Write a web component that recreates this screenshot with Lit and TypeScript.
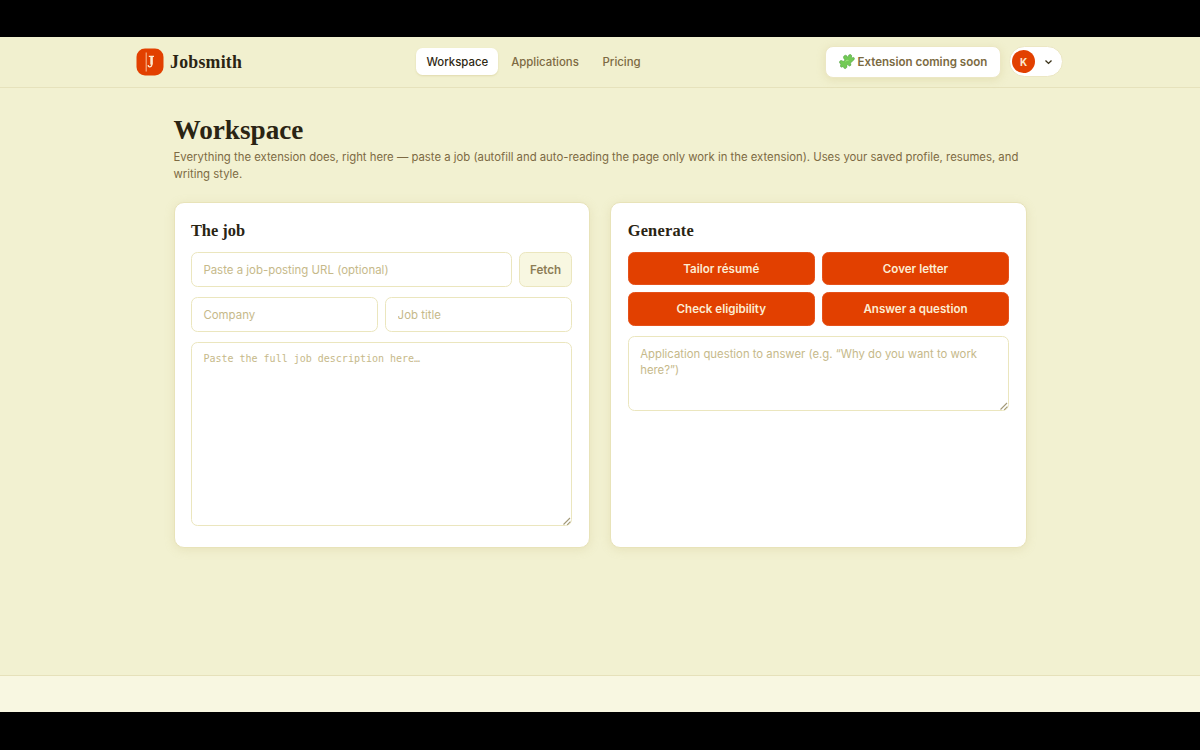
import { LitElement, html, css } from "lit";
import { customElement } from "lit/decorators.js";

const grip = html`<svg class="grip" viewBox="0 0 10 10" width="10" height="10">
  <path d="M1.5 8.5L8 2M5.2 8.8L8.4 5.6" stroke="#a39a78" stroke-width="1.1" fill="none" />
</svg>`;

@customElement("app-root")
export class AppRoot extends LitElement {
  static styles = css`
    :host { display: block; width: 1200px; height: 750px; overflow: hidden; background: #000; font-family: Inter, sans-serif; font-size: 11.4px; color: #2a2413; }
    * { box-sizing: border-box; }
    .frame { height: 750px; padding: 37px 0 38px; }
    .page { height: 675px; background: #f2f1d1; display: flex; flex-direction: column; }
    .top { height: 51px; border-bottom: 1px solid #e6e2bc; display: flex; align-items: center; justify-content: space-between; padding: 0 137px 1px 136px; background: #f1f0cf; }
    .brand { width: 280px; display: flex; align-items: center; gap: 6px; }
    .logo { display: block; }
    .name { font: 700 17.8px/20px "Liberation Serif", serif; letter-spacing: 0.25px; padding-top: 1px; }
    .nav { display: flex; flex: 1; gap: 2.7px; font-weight: 500; color: #7d6a43; }
    .tab { height: 27px; padding: 0 10.5px; display: flex; align-items: center; border-radius: 6.5px; }
    .on { padding-right: 9.8px; background: #fff; color: #2f2813; box-shadow: 0 1px 2px #c9bc7a66; }
    .right { display: flex; align-items: center; gap: 8px; }
    .ext { height: 32px; width: 176px; padding: 0 0 0 13px; display: flex; align-items: center; gap: 2.5px; background: #fff; border-radius: 8px; border: 1px solid #ece7c4; color: #7b6a42; font-weight: 600; font-size: 11.55px; box-shadow: 0 2px 8px #c9bc7a4d; white-space: nowrap; }
    .user { height: 31px; width: 54px; display: flex; align-items: center; gap: 8.5px; padding-left: 2px; background: #fff; border: 1px solid #ece7c4; border-radius: 16px; }
    .avatar { width: 23px; height: 23px; border-radius: 50%; background: #e24000; color: #fbe9cf; font-size: 10px; font-weight: 700; display: grid; place-items: center; }
    .main { flex: 1; padding: 27px 173.5px 0; }
    h1 { margin: 0; font: 700 27.2px/31px "Liberation Serif", serif; }
    .sub { margin: 3px 0 19.1px; font-size: 11.33px; line-height: 16.7px; color: #7d6a43; }
    .cols { display: grid; grid-template-columns: minmax(0, 1fr) minmax(0, 1fr); gap: 20.6px; }
    .card { height: 346px; border: 1px solid #e8e3b9; border-radius: 10px; background: #fff; padding: 17.2px 16.4px; box-shadow: 0 2px 10px #c9bc7a40; display: flex; flex-direction: column; }
    h2 { margin: 0 0 11.3px; font: 700 16.4px/21px "Liberation Serif", serif; }
    .wide { letter-spacing: 0.2px; }
    .row { display: flex; gap: 7px; margin-bottom: 10px; }
    .field { height: 35px; flex: 1; min-width: 0; border: 1px solid #ebe6be; border-radius: 6.5px; background: #fff; padding: 1.4px 11.5px 0; font: 400 11.45px Inter, sans-serif; }
    .field::placeholder, .area::placeholder { color: #c6b98a; opacity: 1; }
    .fetch { width: 53.4px; height: 35px; padding: 1.4px 0 0; border: 1px solid #ebe6be; border-radius: 6.5px; background: #f8f7e1; color: #8c7d55; font: 600 11.67px Inter, sans-serif; }
    .box { position: relative; display: flex; }
    .area { width: 100%; resize: none; border: 1px solid #ebe6be; border-radius: 6.5px; padding: 9.1px 11.5px 8px; font: 400 11.33px/16.7px Inter, sans-serif; overflow: hidden; }
    .mono { height: 184px; padding-top: 8.3px; font: 400 10px/16.7px "DejaVu Sans Mono", monospace; }
    .question { height: 75px; }
    .grip { position: absolute; right: 0; bottom: 0; }
    .actions { display: grid; grid-template-columns: 1fr 1fr; gap: 7px; margin-bottom: 10px; }
    .act { height: 33.3px; padding: 0; border: 1px solid #e5511a; border-radius: 6.5px; background: #e24000; color: #fcecd2; font: 600 11.6px Inter, sans-serif; }
    .foot { height: 37px; border-top: 1px solid #e6e1ba; background: #f8f7e1; }
  `;

  render() {
    return html`<div class="frame"><div class="page">
      <header class="top">
        <div class="brand">
          <svg class="logo" width="28" height="28" viewBox="0 0 28 28">
            <rect x=".5" y=".5" width="27" height="27" rx="8.5" fill="#e24000" />
            <path d="M10.2 4.5V23.5" stroke="#f6b58c" stroke-width="1.1" />
            <path d="M12.8 8.4H18M15.8 8.4V16.2Q15.8 19 13.4 18.8Q12 18.6 12.2 17" stroke="#fdebd0" stroke-width="1.3" fill="none" />
            <path d="M15.5 8.4V16.6" stroke="#fdebd0" stroke-width="2.4" />
          </svg>
          <span class="name">Jobsmith</span>
        </div>
        <nav class="nav"><span class="tab on">Workspace</span><span class="tab">Applications</span><span class="tab">Pricing</span></nav>
        <div class="right">
          <div class="ext">
            <svg width="16" height="16" viewBox="0 0 16 16"><g transform="translate(0 -.4)">
              <path d="M5.2 2.2Q7 .8 8 2.6Q8.3 3.8 9.2 3.2Q9.4 .6 11.6 1Q13.3 1.6 12.4 3.6Q13.2 4.4 14.8 3.8Q16 4.8 14.8 6.4Q13.2 8 12.3 8.6Q11.4 8.6 11.6 9.8Q12.6 12 10.8 12.4Q9.4 12.4 9 11Q8.2 10.8 7.8 11.8Q8.4 14 6.6 15Q4.8 15.2 4.6 13.4Q4 12.6 2.6 13.6Q1 13.6 1.6 11.4Q2.6 10.4 1 9.8Q-.2 8.4 1.2 7.2Q2.8 6.4 3.8 7.6Q5 8 5.6 7Q6 5.6 4.8 4.8Q4 3.2 5.2 2.2Z" fill="#72ca55" stroke="#55a144" stroke-width=".6" />
              <path d="M6.5 7.8Q8 6 9.5 6.8" stroke="#9be477" stroke-width="1" fill="none" />
            </g></svg>
            <span class="exttext">Extension coming soon</span>
          </div>
          <div class="user"><span class="avatar">K</span>
            <svg width="9" height="8" viewBox="0 0 9 8"><path d="M1.5 2.5L4.5 5.4L7.5 2.5" stroke="#3a3219" stroke-width="1.4" fill="none" /></svg>
          </div>
        </div>
      </header>
      <main class="main">
        <h1>Workspace</h1>
        <p class="sub">Everything the extension does, right here — paste a job (autofill and auto-reading the page only work in the extension). Uses your saved profile, resumes, and writing style.</p>
        <div class="cols">
          <section class="card">
            <h2>The job</h2>
            <div class="row"><input class="field" placeholder="Paste a job-posting URL (optional)" /><button class="fetch">Fetch</button></div>
            <div class="row"><input class="field" placeholder="Company" /><input class="field" placeholder="Job title" /></div>
            <div class="box"><textarea class="area mono" placeholder="Paste the full job description here…"></textarea>${grip}</div>
          </section>
          <section class="card">
            <h2 class="wide">Generate</h2>
            <div class="actions">${["Tailor résumé", "Cover letter", "Check eligibility", "Answer a question"].map((t) => html`<button class="act">${t}</button>`)}</div>
            <div class="box"><textarea class="area question" placeholder="Application question to answer (e.g. “Why do you want to work here?”)"></textarea>${grip}</div>
          </section>
        </div>
      </main>
      <footer class="foot"></footer>
    </div></div>`;
  }
}
